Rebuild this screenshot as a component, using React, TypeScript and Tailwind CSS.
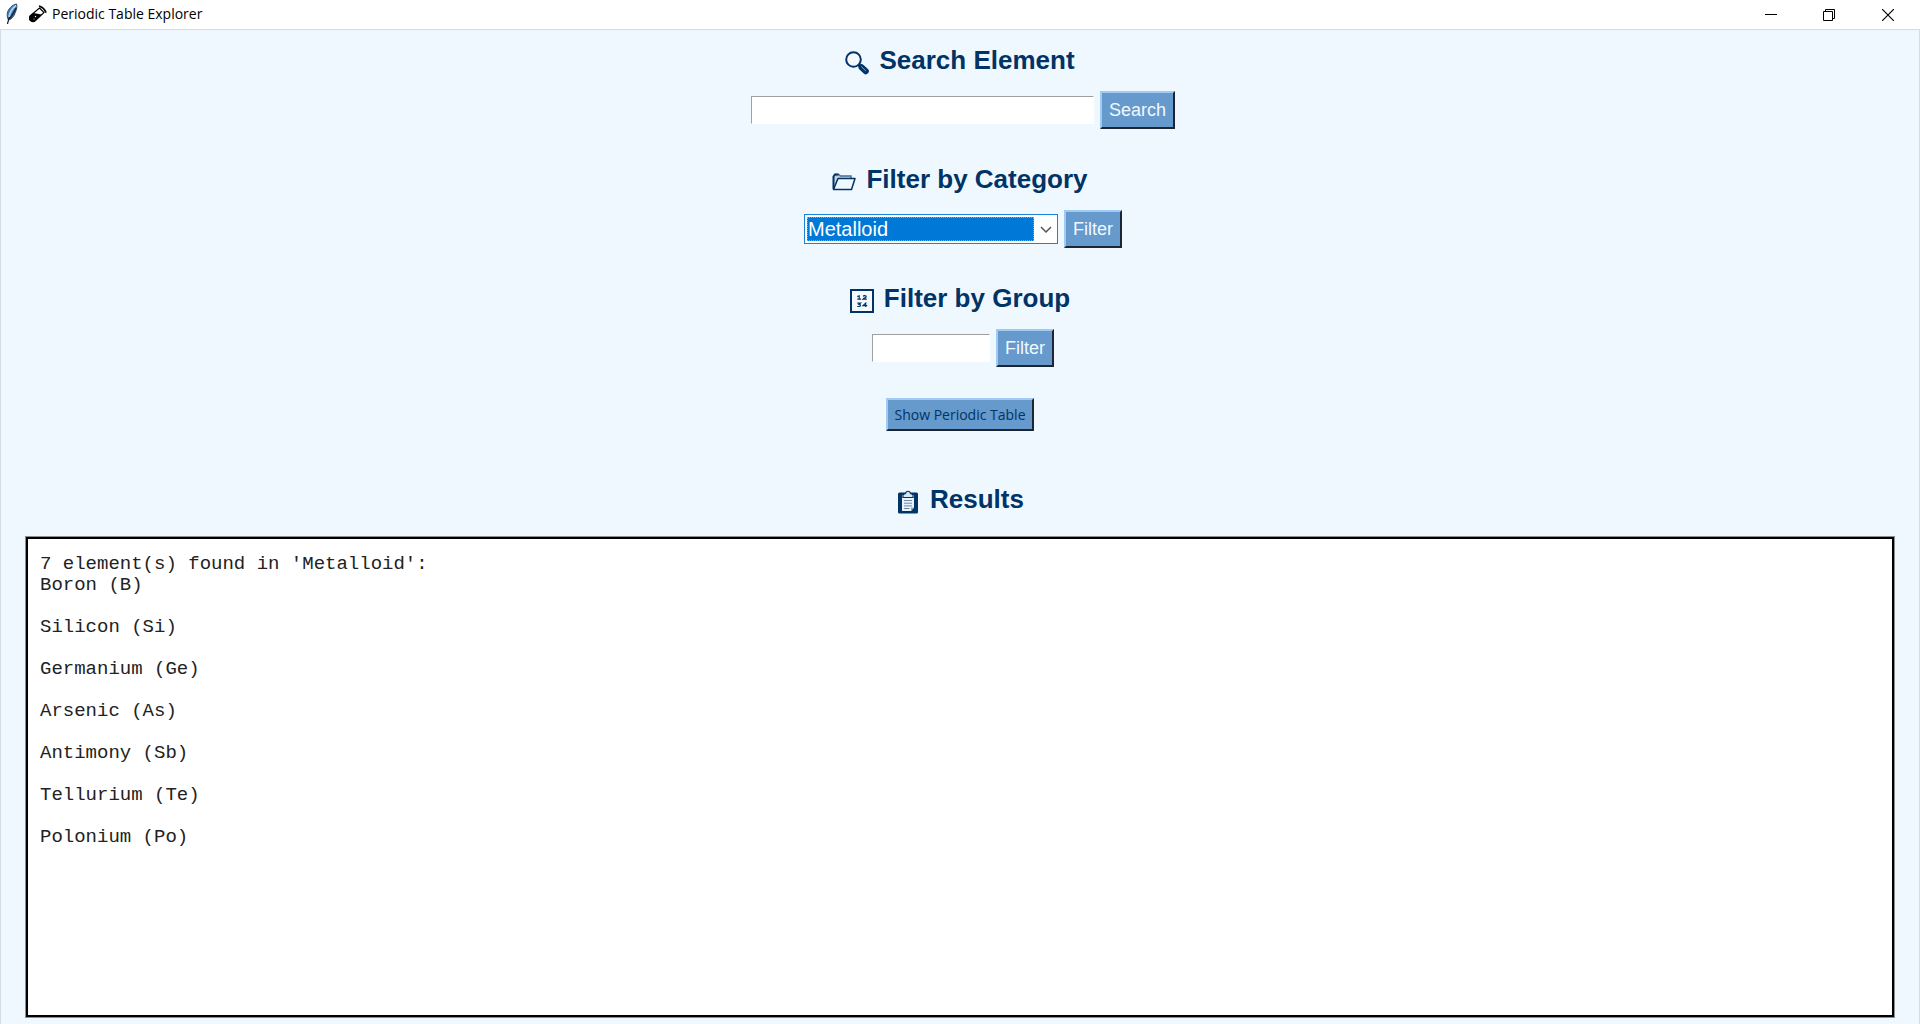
import { useState, type ReactNode, type FormEvent } from "react";

const elements: Record<string, string[]> = {
  Metalloid: [
    "Boron (B)",
    "Silicon (Si)",
    "Germanium (Ge)",
    "Arsenic (As)",
    "Antimony (Sb)",
    "Tellurium (Te)",
    "Polonium (Po)",
  ],
  "Noble Gas": ["Helium (He)", "Neon (Ne)", "Argon (Ar)", "Krypton (Kr)", "Xenon (Xe)", "Radon (Rn)"],
  Halogen: ["Fluorine (F)", "Chlorine (Cl)", "Bromine (Br)", "Iodine (I)", "Astatine (At)"],
};

function describe(category: string) {
  const found = elements[category];
  return `${found.length} element(s) found in '${category}':\n${found.join("\n\n")}`;
}

function FeatherIcon() {
  return (
    <svg width="14" height="22" viewBox="0 0 14 22" aria-hidden="true">
      <path d="M11.500 1C7 2 3 6 2.300 10.500 2 13 2.500 15.500 3.500 17c3-.8 5.500-3.500 6.800-7.500C11.500 6 12.500 4 11.500 1Z" fill="#3f7fbd" stroke="#33485c" strokeWidth="1" />
      <path d="M11 2.500C7.500 5 5 9 4 14" stroke="#a9d3f5" strokeWidth="1.800" fill="none" />
      <path d="M11 5C9 10 7 12.500 4.500 16" stroke="#1c2a38" strokeWidth="1.600" fill="none" />
      <path d="M4.500 14C3.800 16.500 3 18.500 2.500 21" stroke="#1a1a1a" strokeWidth="1.200" fill="none" />
    </svg>
  );
}

function TestTubeIcon() {
  return (
    <svg width="18" height="18" viewBox="0 0 18 18" aria-hidden="true">
      <path d="M10.500 3 15 7.500 6.500 15.500a3.400 3.400 0 0 1-5-5Z" fill="#fff" stroke="#000" strokeWidth="1.100" />
      <path d="M4.500 8 12.500 9.500l-6 6a3.400 3.400 0 0 1-5-5Z" fill="#000" />
      <path d="M10.700 1.200C13 2 15.800 4.500 16.800 7" stroke="#000" strokeWidth="1.700" fill="none" strokeLinecap="round" />
      <circle cx="6.500" cy="11.500" r=".7" fill="#fff" />
      <circle cx="5" cy="14" r=".5" fill="#fff" />
    </svg>
  );
}

function MagnifierIcon() {
  return (
    <svg width="24" height="24" viewBox="0 0 24 24" aria-hidden="true">
      <circle cx="8.500" cy="8.500" r="7.300" fill="#f5faff" stroke="#003366" strokeWidth="2" />
      <path d="m13.500 13.500 2.500 2.500" stroke="#003366" strokeWidth="3" />
      <path d="m16.500 16.300 4.300 4" stroke="#003366" strokeWidth="6" strokeLinecap="round" />
      <path d="m16.500 15.800 4 3.800" stroke="#8fa9c4" strokeWidth="1" strokeLinecap="round" />
    </svg>
  );
}

function FolderIcon() {
  return (
    <svg width="24" height="24" viewBox="0 0 24 24" aria-hidden="true">
      <path d="M1.500 19V6.500L3 4.500h3.500l2 1.500H19V9" fill="#c3d0de" stroke="#4b6c8f" strokeWidth="1.500" />
      <path d="M1.500 19V6.500L3 4.500h3.500" fill="none" stroke="#003366" strokeWidth="1.800" />
      <path d="M6 8.500H23l-3.500 11h-18Z" fill="#f0f8ff" stroke="#003366" strokeWidth="1.500" strokeLinejoin="round" />
    </svg>
  );
}

function NumbersIcon() {
  return (
    <svg width="24" height="24" viewBox="0 0 24 24" aria-hidden="true">
      <rect x="1" y="1" width="22" height="22" fill="#f5faff" stroke="#003366" strokeWidth="2" />
      <path
        d="M7.300 7.600 9.200 6.800v3.300M7.300 10.100H11M13 7.300c.8-.9 3.300-.8 3.200.3-.1.900-2 1.500-3.200 2.500h3.800M7.300 14.100h3.200L9 15.500c2.200 0 1.800 2-.2 2H7.200M15.700 18.100v-4L13 16.600h4.200"
        fill="none"
        stroke="#003366"
        strokeWidth="1.200"
      />
    </svg>
  );
}

function ClipboardIcon() {
  return (
    <svg width="24" height="24" viewBox="0 0 24 24" aria-hidden="true">
      <rect x="2" y="2.500" width="20" height="21" rx="1.500" fill="#003366" />
      <path d="M6 5h12v12.500L15 21H6Z" fill="#eaf2fa" />
      <path d="M18 17.500 15 21v-3.500Z" fill="#8fa9c4" />
      <path d="M7 7.500V5c0-1 1.500-1 2.500-1.500C10 .5 14 .5 14.500 3.500 15.500 4 17 4 17 5v2.500Z" fill="#dce6f0" stroke="#003366" strokeWidth="1.200" />
      <path d="M8 10.500h8M8 13.200h8M8 15.900h8M8 18.500h5.500" stroke="#6b8bad" strokeWidth="1" />
    </svg>
  );
}

function Heading({ icon, children }: { icon: ReactNode; children: ReactNode }) {
  return (
    <h2 className="flex items-center justify-center gap-[10px] text-[26px] leading-[31px] font-bold text-[#003366]">
      <span className="pt-[5px]">{icon}</span>
      {children}
    </h2>
  );
}

const buttonClass =
  "border-2 border-t-[#9fcbf5] border-l-[#9fcbf5] border-r-[#1c2733] border-b-[#1c2733] bg-[#6699cc]";
const fieldClass =
  "h-[28px] border border-t-[#a0a0a0] border-l-[#a0a0a0] border-r-white border-b-white bg-white px-1 text-[20px] text-black outline-none";

function Row({ children, onSubmit }: { children: ReactNode; onSubmit: (e: FormEvent) => void }) {
  return (
    <form onSubmit={onSubmit} className="mt-[15px] mb-[35px] flex items-center justify-center gap-[6px] pl-[6px]">
      {children}
    </form>
  );
}

function ActionButton({ children }: { children: ReactNode }) {
  return (
    <button type="submit" className={`${buttonClass} h-[38px] px-[7px] text-[18px] leading-[21px] text-[#f0f8ff]`}>
      {children}
    </button>
  );
}

export default function App() {
  const [category, setCategory] = useState("Metalloid");
  const [results, setResults] = useState(describe("Metalloid"));
  const stop = (e: FormEvent) => e.preventDefault();

  return (
    <div className="flex min-h-screen flex-col bg-white font-['Liberation_Sans',Arial,sans-serif]">
      <header className="flex h-[29px] items-center pr-[2px] text-black">
        <div className="flex flex-1 items-center pl-[5px] pb-px">
          <FeatherIcon />
          <span className="ml-[10px]">
            <TestTubeIcon />
          </span>
          <h1 className="ml-[5px] font-['Open_Sans','Noto_Sans',sans-serif] text-[14px] leading-5">Periodic Table Explorer</h1>
        </div>
        <button type="button" aria-label="Minimize" className="flex h-full w-[58px] items-center justify-center">
          <svg width="12" height="12" viewBox="0 0 12 12">
            <path d="M0 5.500h12" stroke="#000" />
          </svg>
        </button>
        <button type="button" aria-label="Restore" className="flex h-full w-[58px] items-center justify-center">
          <svg width="12" height="12" viewBox="0 0 12 12" fill="none" stroke="#000">
            <path d="M.5 2.500h9v9h-9ZM2.500 2.500v-2h9v9h-2" />
          </svg>
        </button>
        <button type="button" aria-label="Close" className="flex h-full w-[60px] items-center justify-center">
          <svg width="12" height="12" viewBox="0 0 12 12" stroke="#000" strokeWidth="1.200">
            <path d="m0 0 12 12M12 0 0 12" />
          </svg>
        </button>
      </header>

      <main className="flex flex-1 flex-col border-x border-t border-[#d5dde4] bg-[#f0f8ff] px-[25px] pt-[15px] pb-[7px]">
        <Heading icon={<MagnifierIcon />}>
          <label htmlFor="search">Search Element</label>
        </Heading>
        <Row onSubmit={stop}>
          <input id="search" type="text" className={`${fieldClass} w-[343px]`} />
          <ActionButton>Search</ActionButton>
        </Row>

        <Heading icon={<FolderIcon />}>
          <label htmlFor="category">Filter by Category</label>
        </Heading>
        <Row
          onSubmit={(e) => {
            e.preventDefault();
            setResults(describe(category));
          }}
        >
          <div className="flex h-[30px] w-[254px] items-center border border-[#1a84da] bg-white p-[2px]">
            <select
              id="category"
              value={category}
              onChange={(e) => setCategory(e.target.value)}
              className="h-full flex-1 appearance-none border border-dotted border-[#ff8728] bg-[#0078d7] text-[20px] leading-[22px] text-white outline-none"
            >
              {Object.keys(elements).map((name) => (
                <option key={name}>{name}</option>
              ))}
            </select>
            <svg width="21" height="12" viewBox="0 0 21 12" fill="none" className="shrink-0" aria-hidden="true">
              <path d="m7 4 5 5 5-5" stroke="#555" strokeWidth="1.500" />
            </svg>
          </div>
          <ActionButton>Filter</ActionButton>
        </Row>

        <Heading icon={<NumbersIcon />}>
          <label htmlFor="group">Filter by Group</label>
        </Heading>
        <Row onSubmit={stop}>
          <input id="group" type="text" className={`${fieldClass} w-[118px]`} />
          <ActionButton>Filter</ActionButton>
        </Row>

        <button
          type="button"
          className={`${buttonClass} -mt-1 h-[33px] self-center px-[6px] font-['Open_Sans','Noto_Sans',sans-serif] text-[14px] leading-5 text-[#003366]`}
        >
          Show Periodic Table
        </button>

        <div className="mt-[53px]">
          <Heading icon={<ClipboardIcon />}>
            <label htmlFor="results">Results</label>
          </Heading>
        </div>
        <textarea
          id="results"
          readOnly
          value={results}
          className="mt-[22px] w-full flex-1 resize-none border-2 border-black bg-white px-3 pt-[15px] font-['Liberation_Mono','Courier_New',monospace] text-[19px] leading-[21px] text-[#222] shadow-[0_0_0_1px_#8a8f94] outline-none"
        />
      </main>
    </div>
  );
}
